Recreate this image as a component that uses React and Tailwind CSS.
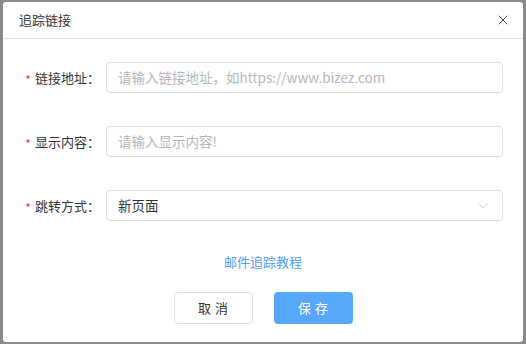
import { ChevronDown, X } from 'lucide-react';

const Field = ({ label, children }) => (
  <div className="flex items-center">
    <div className="w-[103px] flex items-center justify-end pr-[6px] text-[13px] text-[#333]">
      <span className="text-[#f0343c] mr-[4px] text-[12px] translate-y-[2px]">*</span>
      <span>{label}：</span>
    </div>
    <div className="flex-1 mr-[20px]">{children}</div>
  </div>
);

const App = () => {
  return (
    <div
      className="w-[526px] h-[344px] bg-[#8a8a8a] pt-[2px] px-[3px] pb-[2px]"
      style={{ fontFamily: '"Noto Sans CJK SC", "Noto Sans", sans-serif' }}
    >
      <div className="h-[340px] bg-white rounded-[3px] flex flex-col">
        <div className="h-[37px] flex items-center justify-between pl-[16px] pr-[12px] border-b border-[#e2e2e6]">
          <span className="text-[13px] text-[#333]">追踪链接</span>
          <X className="w-[16px] h-[16px] text-[#444]" strokeWidth={1.5} />
        </div>

        <div className="flex flex-col gap-[33px] pt-[23px]">
          <Field label="链接地址">
            <div className="h-[31px] border border-[#dcdfe6] rounded-[4px] flex items-center px-[11px] text-[13.5px] text-[#b4b6bb]">
              请输入链接地址，如https://www.bizez.com
            </div>
          </Field>
          <Field label="显示内容">
            <div className="h-[31px] border border-[#dcdfe6] rounded-[4px] flex items-center px-[11px] text-[13.5px] text-[#b4b6bb]">
              请输入显示内容!
            </div>
          </Field>
          <Field label="跳转方式">
            <div className="h-[31px] border border-[#dcdfe6] rounded-[4px] flex items-center justify-between pl-[11px] pr-[11px] text-[13.5px] text-[#333]">
              <span>新页面</span>
              <ChevronDown className="w-[16px] h-[16px] text-[#c0c4cc]" strokeWidth={1.2} />
            </div>
          </Field>
        </div>

        <div className="flex justify-center pt-[31px]">
          <span className="text-[13px] text-[#4d9ef6]">邮件追踪教程</span>
        </div>

        <div className="flex justify-center gap-[21px] pt-[20px]">
          <button className="w-[79px] h-[32px] border border-[#dcdfe6] rounded-[4px] bg-white text-[13px] text-[#333] tracking-[4px] pl-[4px]">
            取消
          </button>
          <button className="w-[79px] h-[32px] rounded-[4px] bg-[#57a8fb] text-[13px] text-white tracking-[4px] pl-[4px]">
            保存
          </button>
        </div>
      </div>
    </div>
  );
};

export default App;
